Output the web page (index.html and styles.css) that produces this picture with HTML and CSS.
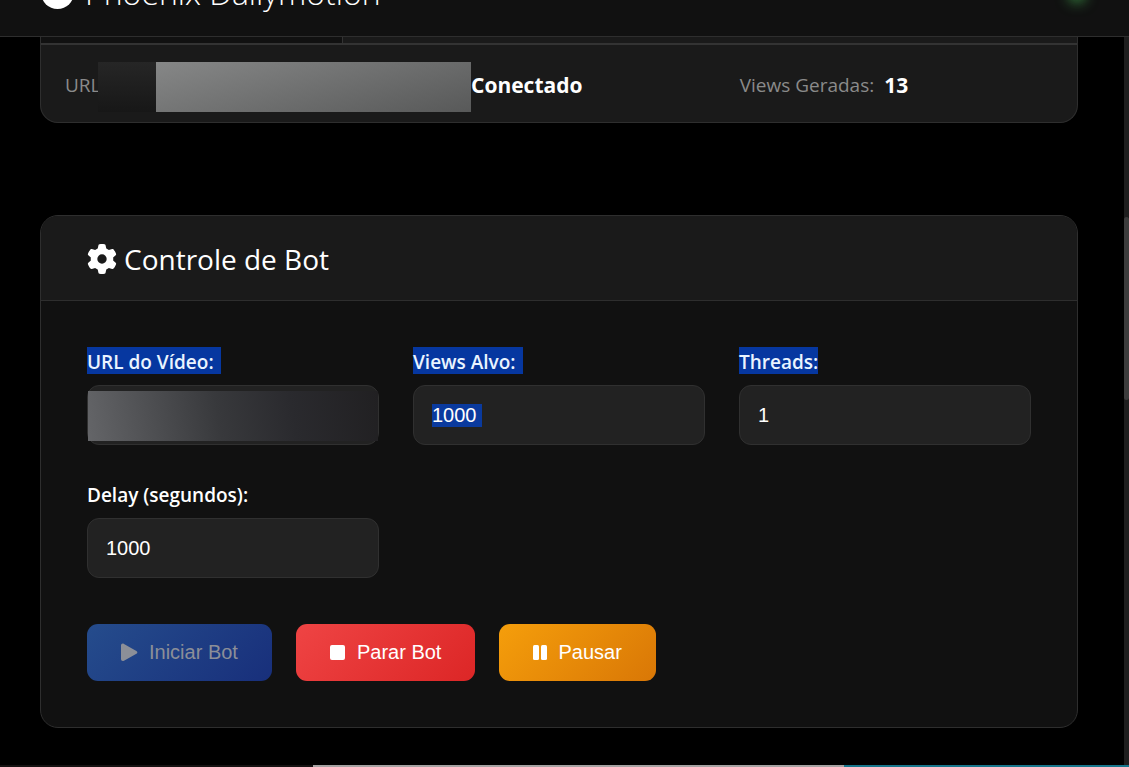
FILE: index.html
```html
<!DOCTYPE html>
<html lang="pt-BR">
<head>
    <meta charset="UTF-8">
    <meta name="viewport" content="width=device-width, initial-scale=1.0">
    <title>Phoenix Dailymotion</title>
    <link rel="stylesheet" href="styles.css">
</head>
<body>
    <header class="header">
        <div class="brand">
            <svg class="logo" viewBox="0 0 32 32" aria-hidden="true"><circle cx="16" cy="16" r="16" fill="#fff"/></svg>
            <h1>Phoenix Dailymotion</h1>
        </div>
        <span class="status-dot"></span>
    </header>

    <div class="page">
        <main class="container">
            <section class="status-card">
                <div class="progress"><div class="progress-bar"></div></div>
                <div class="status-row">
                    <div class="status-item wide">
                        <span class="status-label short">URL</span>
                        <span class="mask mask-dark"></span>
                        <span class="mask mask-light"></span>
                        <span class="status-value">Conectado</span>
                    </div>
                    <div class="status-item">
                        <span class="status-label">Views Geradas:</span>
                        <span class="status-value count">13</span>
                    </div>
                </div>
            </section>

            <section class="card">
                <div class="card-header">
                    <svg class="gear" viewBox="0 0 512 512" aria-hidden="true"><path fill="currentColor" d="M495.900 166.600c3.200 8.700.5 18.400-6.400 24.600l-43.300 39.400c1.100 8.300 1.700 16.800 1.700 25.400s-.6 17.100-1.700 25.400l43.300 39.400c6.900 6.200 9.600 15.900 6.400 24.600-4.400 11.900-9.700 23.300-15.800 34.300l-4.700 8.100c-6.600 11-14 21.400-22.100 31.200-5.900 7.200-15.700 9.600-24.500 6.800l-55.700-17.700c-13.400 10.300-28.200 18.900-44 25.400l-12.500 57.100c-2 9.100-9 16.300-18.200 17.800-13.800 2.300-28 3.500-42.500 3.500s-28.700-1.200-42.500-3.500c-9.200-1.500-16.200-8.700-18.200-17.800l-12.500-57.100c-15.800-6.500-30.600-15.100-44-25.400L83.100 425.900c-8.800 2.800-18.600.3-24.500-6.800-8.100-9.800-15.500-20.200-22.100-31.200l-4.700-8.100c-6.100-11-11.400-22.400-15.800-34.300-3.200-8.700-.5-18.400 6.400-24.600l43.300-39.400C64.600 273.100 64 264.600 64 256s.6-17.100 1.700-25.400L22.400 191.200c-6.900-6.200-9.600-15.900-6.400-24.600 4.400-11.900 9.700-23.300 15.800-34.300l4.700-8.100c6.600-11 14-21.400 22.100-31.200 5.900-7.200 15.700-9.600 24.500-6.800l55.700 17.700c13.400-10.300 28.200-18.900 44-25.400l12.500-57.100c2-9.100 9-16.300 18.200-17.800C227.300 1.200 241.500 0 256 0s28.700 1.200 42.500 3.500c9.200 1.500 16.200 8.700 18.200 17.800l12.500 57.100c15.800 6.500 30.600 15.100 44 25.400l55.700-17.700c8.800-2.800 18.600-.3 24.500 6.800 8.100 9.800 15.500 20.200 22.100 31.200l4.700 8.100c6.100 11 11.400 22.400 15.800 34.300zM256 336a80 80 0 1 0 0-160 80 80 0 1 0 0 160z"/></svg>
                    <h2>Controle de Bot</h2>
                </div>
                <form class="card-body">
                    <div class="form-grid">
                        <div class="form-group">
                            <label for="videoUrl"><span class="marked trail">URL do Vídeo:</span></label>
                            <div class="masked-input">
                                <input type="text" id="videoUrl">
                            </div>
                        </div>
                        <div class="form-group">
                            <label for="views"><span class="marked trail">Views Alvo:</span></label>
                            <input type="text" id="views" class="marked-value" inputmode="numeric" value="1000">
                        </div>
                        <div class="form-group">
                            <label for="threads"><span class="marked">Threads:</span></label>
                            <input type="text" id="threads" inputmode="numeric" value="1">
                        </div>
                        <div class="form-group">
                            <label for="delay"><span>Delay (segundos):</span></label>
                            <input type="text" id="delay" inputmode="numeric" value="1000">
                        </div>
                    </div>
                    <div class="buttons">
                        <button type="button" class="btn btn-start" disabled>
                            <svg width="17" height="20" viewBox="0 0 17 20" aria-hidden="true"><path fill="currentColor" d="M0 2.500C0 .8 1.500 0 3 .9l12.400 7c1.300.8 1.300 2 0 2.800L3 17.700C1.500 18.600 0 17.800 0 16.100z"/></svg>
                            Iniciar Bot
                        </button>
                        <button type="button" class="btn btn-stop">
                            <svg width="16" height="20" viewBox="0 0 16 20" aria-hidden="true"><rect y="2" width="15" height="15" rx="2" fill="currentColor"/></svg>
                            Parar Bot
                        </button>
                        <button type="button" class="btn btn-pause">
                            <svg width="14" height="20" viewBox="0 0 14 20" aria-hidden="true"><rect y="2" width="6" height="15" rx="1.500" fill="currentColor"/><rect x="8" y="2" width="6" height="15" rx="1.500" fill="currentColor"/></svg>
                            Pausar
                        </button>
                    </div>
                </form>
            </section>
        </main>
        <div class="scrollbar"><div class="scroll-thumb"></div></div>
    </div>

    <footer class="taskbar">
        <span class="task-dark"></span>
        <span class="task-light"></span>
        <span class="task-teal"></span>
    </footer>
</body>
</html>
```

FILE: styles.css
```css
* {
    box-sizing: border-box;
}
body {
    margin: 0;
    min-height: 100vh;
    display: flex;
    flex-direction: column;
    background-color: #000;
    color: #fff;
    font-family: 'Segoe UI', 'Open Sans', 'Noto Sans', sans-serif;
    overflow: hidden;
}
h1, h2 {
    margin: 0;
}
.header {
    height: 37px;
    padding: 0 46px 27px 41px;
    display: flex;
    justify-content: space-between;
    align-items: flex-end;
    background-color: #111;
    border-bottom: 1px solid #2e2e2e;
    overflow: hidden;
}
.brand {
    display: flex;
    align-items: flex-end;
    gap: 11px;
}
.logo {
    width: 33px;
    height: 33px;
}
.brand h1 {
    font-size: 32px;
    font-weight: 300;
    line-height: 32px;
}
.status-dot {
    width: 12px;
    height: 12px;
    margin-bottom: 9px;
    border-radius: 50%;
    background-color: #22c55e;
    box-shadow: 0 0 14px 2px #3f9a4a;
}
.page {
    flex: 1;
    display: flex;
}
.container {
    flex: 1;
    padding: 0 46px 37px 40px;
}
.status-card {
    margin-bottom: 92px;
    background-color: #1a1a1a;
    border: 1px solid #2e2e2e;
    border-top: none;
    border-radius: 0 0 18px 18px;
}
.progress {
    height: 8px;
    border-bottom: 2px solid #333;
}
.progress-bar {
    width: 302px;
    max-width: 100%;
    height: 100%;
    background-color: #111;
    border-right: 1px solid #333;
}
.status-row {
    display: grid;
    grid-template-columns: repeat(3, 1fr);
    gap: 24px;
    height: 77px;
    padding: 2px 24px 0;
}
.status-item {
    display: flex;
    align-items: center;
    font-size: 19px;
    white-space: nowrap;
}
.status-item.wide {
    grid-column: span 2;
}
.status-label {
    color: #8a8a8a;
}
.status-label.short {
    width: 33px;
}
.status-value {
    font-size: 21px;
    font-weight: 700;
}
.count {
    margin-left: 10px;
}
.mask {
    height: 50px;
    margin-top: 4px;
}
.mask-dark {
    width: 58px;
    background: linear-gradient(#262626, #171717);
}
.mask-light {
    width: 315px;
    background: linear-gradient(165deg, #868787, #585959);
}
.card {
    background-color: #111;
    border: 1px solid #2e2e2e;
    border-radius: 18px;
    overflow: hidden;
}
.card-header {
    display: flex;
    align-items: center;
    gap: 7px;
    height: 85px;
    padding: 2px 46px 0;
    background-color: #1a1a1a;
    border-bottom: 1px solid #2e2e2e;
}
.card-header h2 {
    font-size: 28px;
    font-weight: 400;
}
.gear {
    width: 30px;
    height: 30px;
}
.card-body {
    padding: 46px;
}
.form-grid {
    display: grid;
    grid-template-columns: repeat(3, 1fr);
    gap: 35px 34px;
    margin-bottom: 46px;
}
label {
    display: flex;
    margin-bottom: 11px;
    font-size: 19px;
    font-weight: 600;
    line-height: 24px;
}
label span {
    padding-top: 3px;
}
.marked {
    background-color: #0637a0;
    color: #eaf4ff;
}
.marked.trail {
    padding-right: 7px;
}
input {
    display: block;
    width: 100%;
    height: 60px;
    padding: 0 18px;
    background-color: #222;
    border: 1px solid #303030;
    border-radius: 12px;
    color: #fff;
    font-family: Arial, 'Liberation Sans', sans-serif;
    font-size: 20px;
}
.marked-value {
    background-image: linear-gradient(#0a3a9e, #0a3a9e);
    background-size: 50px 23px;
    background-position: 18px center;
    background-repeat: no-repeat;
}
.masked-input {
    position: relative;
}
.masked-input::after {
    content: "";
    position: absolute;
    inset: 6px 1px 4px;
    background: linear-gradient(80deg, #646568, #38393c 45%, #2a2a2e 70%, #212022);
}
.buttons {
    display: flex;
    flex-wrap: wrap;
    gap: 24px;
}
.btn {
    display: flex;
    align-items: center;
    gap: 11px;
    height: 57px;
    padding: 0 34px;
    border: none;
    border-radius: 11px;
    color: #fff;
    font-family: Arial, 'Liberation Sans', sans-serif;
    font-size: 20px;
    cursor: pointer;
}
.btn-start {
    background: linear-gradient(135deg, #254c8c, #182f7b);
    color: #8c8f98;
    cursor: not-allowed;
}
.btn-stop {
    background: linear-gradient(135deg, #ef4444, #dc2626);
}
.btn-pause {
    background: linear-gradient(135deg, #f59e0b, #d97706);
}
.scrollbar {
    width: 5px;
    padding-top: 180px;
    background-color: #1e1e1e;
}
.scroll-thumb {
    height: 183px;
    border-radius: 3px;
    background-color: #3c3c3c;
}
.taskbar {
    display: flex;
    height: 2px;
}
.task-dark {
    width: 313px;
    background-color: #151212;
}
.task-light {
    width: 531px;
    background-color: #a5a2a2;
}
.task-teal {
    flex: 1;
    background-color: #17768c;
}
```
